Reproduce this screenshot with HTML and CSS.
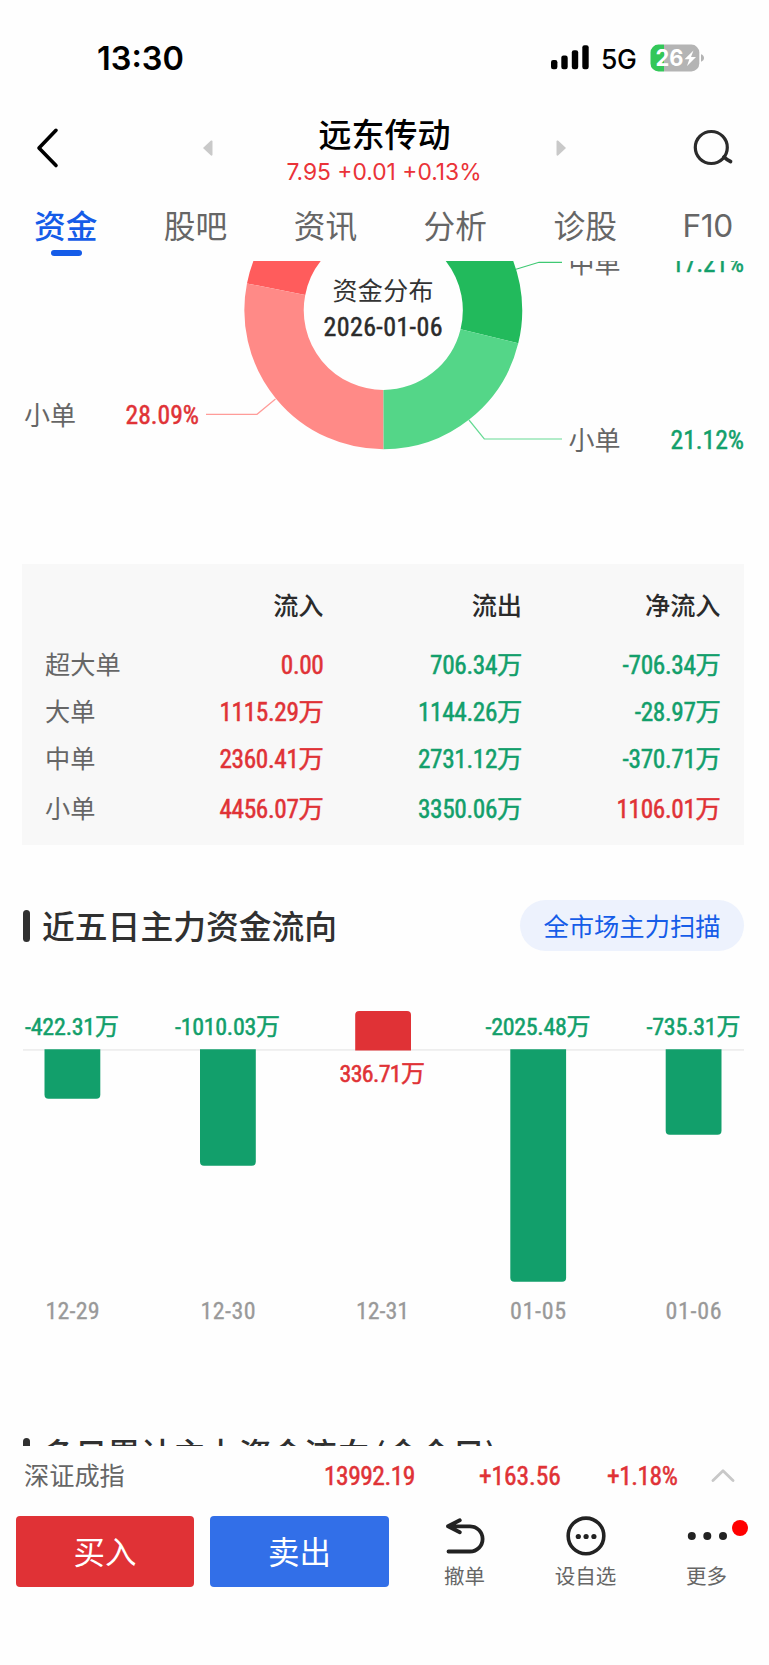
FILE: index.html
```html
<!DOCTYPE html>
<html lang="zh-CN">
<head>
<meta charset="utf-8">
<title>远东传动</title>
<link rel="stylesheet" href="styles.css">
</head>
<body>
<div class="app">
  <div class="status">
    <span class="clock">13:30</span>
    <svg class="signal" width="38" height="25" viewBox="0 0 38 25">
      <rect x="0" y="15" width="6.4" height="9.3" rx="2.2"/><rect x="10.3" y="10.6" width="6.4" height="13.7" rx="2.2"/><rect x="20.8" y="5.3" width="6.4" height="19" rx="2.2"/><rect x="31.3" y="0.3" width="6.4" height="24" rx="2.2"/>
    </svg>
    <span class="net">5G</span>
    <svg class="battery" width="54" height="28" viewBox="0 0 54 28">
      <path d="M8.5.6H14V27.4H8.5a8 8 0 0 1-8-8V8.6a8 8 0 0 1 8-8z" fill="#33c759"/>
      <path d="M14 .6h27.3a8 8 0 0 1 8 8v10.8a8 8 0 0 1-8 8H14z" fill="#b4b4b4"/>
      <path d="M51 10.3c4 1.2 4 6.200 0 7.400z" fill="#b4b4b4"/>
      <text class="charge" x="5.500" y="22" textLength="28" lengthAdjust="spacingAndGlyphs">26</text>
      <path d="M43.500 6.500L34.500 15.300h4.800L37 22l9-8.900h-5z" fill="#fff"/>
    </svg>
  </div>

  <header class="head">
    <svg class="back" width="24" height="42" viewBox="0 0 24 42"><path d="M20 3.300L3 21l17 17.500" fill="none" stroke="#000" stroke-width="3.600" stroke-linecap="round" stroke-linejoin="round"/></svg>
    <svg class="prev" width="10" height="16" viewBox="0 0 10 16"><path d="M0 8L8 .5Q9.500 0 9.500 1.500v13Q9.500 16 8 15.500z" fill="#c9c9c9"/></svg>
    <div class="name"><h1>远东传动</h1><p>7.95 +0.01 +0.13%</p></div>
    <svg class="next" width="10" height="16" viewBox="0 0 10 16"><path d="M10 8L2 .5Q.5 0 .5 1.500v13Q.5 16 2 15.500z" fill="#c9c9c9"/></svg>
    <svg class="search" width="42" height="38" viewBox="0 0 42 38"><g fill="none" stroke="#2b2b2b" stroke-linecap="round"><circle cx="19.300" cy="18.500" r="16" stroke-width="3.200"/><path d="M32 28q3 3 6.500 4.500" stroke-width="3.800"/></g></svg>
  </header>

  <nav class="tabs">
    <span class="tab on">资金</span><span class="tab">股吧</span><span class="tab">资讯</span><span class="tab">分析</span><span class="tab">诊股</span><span class="tab f10">F10</span>
  </nav>

  <main class="page">
    <svg class="donut" width="769" height="303" viewBox="0 261 769 303">
      <g fill="none" stroke-width="59.400">
        <path d="M276.100 289.200A109.300 109.300 0 0 1 383.500 201" stroke="#ff5c5c"/>
        <path d="M383.500 419.600A109.300 109.300 0 0 1 276.100 289.200" stroke="#ff8a87"/>
        <path d="M383.500 201A109.300 109.300 0 0 1 489.400 336.300" stroke="#22ba5c"/>
        <path d="M489.400 336.300A109.300 109.300 0 0 1 383.500 419.600" stroke="#54d688"/>
      </g>
      <g fill="none" stroke-width="1.200">
        <path d="M206 414.300H257L275.500 399" stroke="#ff9c99"/>
        <path d="M516 269.200L539 262.300H562" stroke="#3fc973"/>
        <path d="M469 420L484.300 439H562" stroke="#66da94"/>
      </g>
      <text class="cap" x="332.500" y="300.200" textLength="101">资金分布</text>
      <text class="num dark" x="323.500" y="336.300" textLength="119">2026-01-06</text>
      <text class="lbl" x="24" y="425">小单</text>
      <text class="num up" x="125.500" y="423.800" textLength="73.500" lengthAdjust="spacingAndGlyphs">28.09%</text>
      <text class="lbl" x="568.500" y="273">中单</text>
      <text class="num down" x="671.500" y="272" textLength="72.500" lengthAdjust="spacingAndGlyphs">17.21%</text>
      <text class="lbl" x="568.500" y="449.700">小单</text>
      <text class="num down" x="670.500" y="449" textLength="73.500" lengthAdjust="spacingAndGlyphs">21.12%</text>
    </svg>

    <div class="flow">
      <div class="row th"><span></span><span>流入</span><span>流出</span><span>净流入</span></div>
      <div class="row"><span>超大单</span><b class="up">0.00</b><b class="down">706.34万</b><b class="down">-706.34万</b></div>
      <div class="row"><span>大单</span><b class="up">1115.29万</b><b class="down">1144.26万</b><b class="down">-28.97万</b></div>
      <div class="row"><span>中单</span><b class="up">2360.41万</b><b class="down">2731.12万</b><b class="down">-370.71万</b></div>
      <div class="row last"><span>小单</span><b class="up">4456.07万</b><b class="down">3350.06万</b><b class="up">1106.01万</b></div>
    </div>

    <div class="title"><h2>近五日主力资金流向</h2><span class="pill">全市场主力扫描</span></div>

    <svg class="bars" width="769" height="487" viewBox="0 951 769 487">
      <rect x="23" y="1049" width="721" height="1.800" fill="#eee"/>
      <g class="down">
        <path d="M44.500 1049.300H100.300V1094.700a4 4 0 0 1-4 4H48.500a4 4 0 0 1-4-4z"/>
        <path d="M200 1049.300H255.800V1161.700a4 4 0 0 1-4 4H204a4 4 0 0 1-4-4z"/>
        <path d="M510.300 1049.300H566.100V1277.700a4 4 0 0 1-4 4H514.300a4 4 0 0 1-4-4z"/>
        <path d="M665.700 1049.300H721.500V1130.700a4 4 0 0 1-4 4H669.700a4 4 0 0 1-4-4z"/>
      </g>
      <path class="up" d="M355.200 1050.600V1015a4 4 0 0 1 4-4H407a4 4 0 0 1 4 4V1050.600z"/>
      <g class="val down">
        <text x="25" y="1035" textLength="94">-422.31万</text>
        <text x="175" y="1035" textLength="105">-1010.03万</text>
        <text x="485.500" y="1035" textLength="105">-2025.48万</text>
        <text x="646.500" y="1035" textLength="94">-735.31万</text>
      </g>
      <text class="val up" x="339.500" y="1082" textLength="85.500">336.71万</text>
      <g class="day">
        <text x="45.500" y="1319" textLength="54">12-29</text>
        <text x="200.500" y="1319" textLength="55">12-30</text>
        <text x="356" y="1319" textLength="53">12-31</text>
        <text x="510" y="1319" textLength="56">01-05</text>
        <text x="665.500" y="1319" textLength="56">01-06</text>
      </g>
    </svg>

    <div class="title"><h2>多日累计主力资金流向<span class="paren">(</span>含今日)</h2></div>
  </main>

  <div class="index">
    <span class="iname">深证成指</span>
    <b class="i1">13992.19</b><b class="i2">+163.56</b><b class="i3">+1.18%</b>
    <svg width="24" height="14" viewBox="0 0 24 14"><path d="M2 11.500L12 1.800 22 11.500" fill="none" stroke="#c8c8c8" stroke-width="2.800" stroke-linecap="round" stroke-linejoin="round"/></svg>
  </div>

  <footer class="actions">
    <button class="buy">买入</button><button class="sell">卖出</button>
    <div class="act">
      <svg width="40" height="40" viewBox="0 0 40 40"><path d="M3.500 35.500H25a12.600 12.600 0 0 0 0-25.200H3.500M14.800 4.300L3 10.300l11.800 6" fill="none" stroke="#222" stroke-width="3.800" stroke-linecap="round" stroke-linejoin="round"/></svg>
      <span>撤单</span>
    </div>
    <div class="act">
      <svg width="40" height="40" viewBox="0 0 40 40"><circle cx="20" cy="19.900" r="17.800" fill="none" stroke="#222" stroke-width="3.600"/><g fill="#222"><circle cx="12.300" cy="20.500" r="2.600"/><circle cx="20.100" cy="20.500" r="2.600"/><circle cx="27.900" cy="20.500" r="2.600"/></g></svg>
      <span>设自选</span>
    </div>
    <div class="act">
      <svg width="40" height="40" viewBox="0 0 40 40"><g fill="#222"><circle cx="4.800" cy="20" r="4"/><circle cx="20.300" cy="20" r="4"/><circle cx="36" cy="20" r="4"/></g></svg>
      <i class="dot"></i>
      <span>更多</span>
    </div>
  </footer>
</div>
</body>
</html>
```
FILE: styles.css
```css
* { box-sizing: border-box; }
body, h1, h2, p { margin: 0; }
body { background: #fff; font-family: "Noto Sans CJK SC", sans-serif; }
svg { display: block; flex: none; }
.app { width: 769px; height: 1665px; overflow: hidden; display: flex; flex-direction: column; background: #fefefe; }

.status { height: 110px; padding: 0 71px 0 97px; display: flex; align-items: center; font-family: Inter, sans-serif; color: #000; }
.clock { font-size: 32.500px; font-weight: 600; line-height: 40px; width: 454px; padding-top: 7px; }
.signal { margin-top: 4px; }
.net { font-size: 26.500px; line-height: 30px; font-weight: 500; width: 49px; margin: 7px 0 0 12px; letter-spacing: -.3px; }
.battery { margin-top: 5px; margin-right: -6px; }
.charge { font: 700 22.500px Inter, sans-serif; fill: #fff; }

.head { height: 85px; display: flex; align-items: flex-start; }
.back { margin: 17px 0 0 36px; }
.prev { margin: 30px 0 0 143px; }
.name { width: 343px; text-align: center; }
.name h1 { font-size: 33px; font-weight: 500; line-height: 46px; height: 50px; color: #000; }
.name p { font: 400 22.800px/24px Inter, sans-serif; color: #ea3338; margin-left: -1px; }
.next { margin-top: 30px; }
.search { margin: 19px 0 0 126px; }

.tabs { height: 66px; display: grid; grid-template-columns: repeat(5, 129.900px) 115px; margin-left: .7px; color: #666; font-size: 31.700px; text-align: center; line-height: 58px; }
.tab.on { color: #155ce8; font-weight: 500; display: flex; flex-direction: column; align-items: center; }
.tab.on::after { content: ""; width: 31px; height: 6px; border-radius: 3px; background: #155ce8; margin-top: -3px; margin-left: 2px; }
.f10 { font-family: Inter, sans-serif; letter-spacing: -.5px; line-height: 62px; }

.page { height: 1185px; overflow: hidden; }
.up { color: #e03236; fill: #e03236; }
.down { color: #129f6b; fill: #129f6b; }
.num, .val, .day { font-family: "Roboto Condensed", "Noto Sans CJK SC", sans-serif; font-size: 26px; }
.num.up, .num.down, .val.down text, .val.up { stroke: currentColor; stroke-width: .5px; }
.val, .day { font-size: 24px; }
.dark { fill: #2b2b2b; stroke: #2b2b2b; stroke-width: .5px; }
.cap { font-size: 25px; fill: #333; }
.lbl { font-size: 26px; fill: #666; }
.day { fill: #999; stroke: #999; stroke-width: .3px; }

.flow { margin: 0 25px 0 22px; height: 281px; padding: 17px 24px 0 23px; background: #f8f8f8; font-size: 25.200px; color: #666; }
.row { display: grid; grid-template-columns: 80px 198.500px 198.500px 198.500px; height: 47px; line-height: 47px; align-items: center; }
.row > :not(:first-child) { text-align: right; }
.row b { font-family: "Roboto Condensed", "Noto Sans CJK SC", sans-serif; font-weight: 400; font-size: 25.300px; letter-spacing: -.35px; padding-top: 4px; line-height: 45px; -webkit-text-stroke: .5px currentColor; }
.th { font-weight: 500; color: #2b2b2b; margin-bottom: 11px; }
.last { margin-top: 3px; }

.title { display: flex; justify-content: space-between; align-items: center; padding: 0 25px 0 23px; margin-top: 55px; height: 51px; }
.title h2 { display: flex; align-items: center; font-size: 32.800px; line-height: 46px; padding-bottom: 2px; font-weight: 500; color: #303030; white-space: pre; }
.title h2::before { content: ""; width: 7px; height: 32px; border-radius: 3.500px; background: #303030; margin: 2px 12px 0 0; }
.paren { margin: 0 1px 0 4px; }
.pill { width: 224px; height: 51px; line-height: 50px; border-radius: 26px; background: #edf2fd; color: #155ce8; font-size: 25.300px; text-align: center; }
.bars + .title { margin-top: -10px; }

.index { height: 60px; display: flex; align-items: center; padding: 0 34px 0 24px; }
.iname { font-size: 25.200px; line-height: 36px; padding-bottom: 4px; color: #666; width: 300px; }
.index b { font-family: "Roboto Condensed", sans-serif; font-weight: 400; font-size: 25.500px; letter-spacing: -.5px; color: #e03236; -webkit-text-stroke: .5px currentColor; }
.i1 { width: 155px; }
.index .i2 { width: 128px; letter-spacing: -.1px; }
.i3 { width: 104px; }

.actions { height: 159px; display: flex; padding: 10px 0 0 16px; align-items: flex-start; }
button { border: 0; padding: 0 0 2px; width: 178px; height: 71px; border-radius: 4px; color: #fff; font: 400 31.500px/69px "Noto Sans CJK SC", sans-serif; }
.buy { background: #e03236; margin-right: 16px; }
.sell { background: #326fe8; width: 179px; margin-right: 15px; }
.act { position: relative; width: 121px; display: flex; flex-direction: column; align-items: center; font-size: 20.500px; line-height: 30px; color: #666; }
.act span { margin-top: 4px; }
.dot { position: absolute; left: 86px; top: 4px; width: 16px; height: 16px; border-radius: 50%; background: #f00; }
```
